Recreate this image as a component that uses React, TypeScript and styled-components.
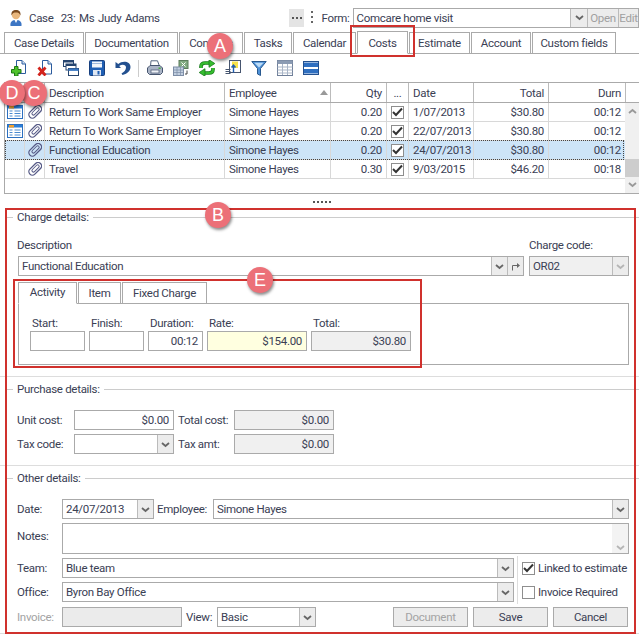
import React from 'react';
import styled, { createGlobalStyle } from 'styled-components';

const Global = createGlobalStyle`
  html, body { margin: 0; padding: 0; background: #fff; }
  body { font-family: Roboto, "Noto Sans", sans-serif; font-size: 11.5px; letter-spacing: -0.3px; color: #3a4054; }
  * { box-sizing: border-box; }
`;

const Page = styled.div`
  position: relative;
  width: 639px;
  height: 634px;
  overflow: hidden;
  background: #fff;
`;

const Text = styled.span`
  line-height: 14px;
  white-space: nowrap;
`;

const TopBar = styled.div`
  display: flex;
  align-items: center;
  height: 32px;
  padding: 3px 0 0 9px;
`;

const CaseTitle = styled(Text)`
  margin-left: 6px;
  width: 261px;
  word-spacing: 1px;
`;

const Dots = styled.div`
  width: 10px;
  height: 2px;
  background-image: linear-gradient(90deg, #555 2px, transparent 2px);
  background-size: 4px 2px;
`;

const MoreButton = styled.div`
  width: 15px;
  height: 18px;
  background: #e4e4e4;
  display: flex;
  align-items: center;
  justify-content: center;
`;

const Grip = styled.div`
  width: 2px;
  height: 14px;
  margin: 0 8px 0 7px;
  background-image: linear-gradient(#666 2px, transparent 2px);
  background-size: 2px 5px;
`;

const FormBox = styled.div`
  display: flex;
  height: 20px;
  width: 287px;
  margin-left: 3px;
  border: 1px solid #aaa;
`;

const FormValue = styled.div`
  flex: 1;
  padding-left: 3px;
  line-height: 18px;
`;

const GreyCell = styled.div<{ $w: number; $dark?: boolean }>`
  width: ${p => p.$w}px;
  flex: none;
  border-left: 1px solid #bbb;
  background: #ececec;
  color: ${p => (p.$dark ? '#666' : '#a0a0a0')};
  line-height: 18px;
  display: flex;
  align-items: center;
  justify-content: center;
  overflow: hidden;
`;

const TabRow = styled.div`
  display: flex;
  align-items: flex-end;
  height: 22px;
  padding-left: 4px;
  border-bottom: 1px solid #aaa;
`;

const Tab = styled.div<{ $w: number; $on?: boolean }>`
  width: ${p => p.$w}px;
  height: ${p => (p.$on ? 23 : 21)}px;
  margin-bottom: ${p => (p.$on ? -1 : 0)}px;
  margin-right: 1px;
  border: 1px solid #aaa;
  border-bottom: ${p => (p.$on ? '1px solid #fff' : 'none')};
  background: #fff;
  line-height: ${p => (p.$on ? 22 : 20)}px;
  text-align: center;
  white-space: nowrap;
`;

const Toolbar = styled.div`
  display: flex;
  align-items: center;
  height: 28px;
  padding-left: 11px;
`;

const Tool = styled.div`
  width: 16px;
  height: 16px;
  margin-right: 10px;
  flex: none;
  svg { display: block; }
`;

const ToolSep = styled.div`
  width: 1px;
  height: 17px;
  background: #ccc;
  margin: 0 8px 0 -3px;
`;

const Grid = styled.div`
  position: relative;
  margin-left: 4px;
  width: 635px;
  height: 112px;
  border-top: 1px solid #aaa;
  border-left: 1px solid #aaa;
  border-bottom: 1px solid #aaa;
`;

const GridRow = styled.div<{ $h: number; $sel?: boolean }>`
  display: grid;
  grid-template-columns: 20px 20px 180px 106px 56px 22px 65px 75px 77px 13px;
  height: ${p => p.$h}px;
  border-bottom: 1px solid ${p => (p.$h === 20 ? '#aaa' : '#d8d8d8')};
  background: ${p => (p.$sel ? '#cde4f7' : '#fff')};
`;

const Cell = styled.div<{ $right?: boolean; $center?: boolean; $head?: boolean; $split?: boolean }>`
  display: flex;
  align-items: center;
  justify-content: ${p => (p.$split ? 'space-between' : p.$right ? 'flex-end' : p.$center ? 'center' : 'flex-start')};
  padding: 0 4px;
  white-space: nowrap;
  overflow: hidden;
  border-right: 1px solid ${p => (p.$head ? '#bbb' : '#d8d8d8')};
`;

const IconCell = styled(Cell)`
  padding: 0;
  justify-content: center;
`;

const PlainCell = styled.div``;

const SortArrow = styled.div`
  width: 0;
  height: 0;
  margin-right: -2px;
  border-left: 4px solid transparent;
  border-right: 4px solid transparent;
  border-bottom: 5px solid #999;
`;

const Dotted = styled.div`
  position: absolute;
  left: 0;
  top: 57px;
  width: 619px;
  height: 20px;
  border: 1px dotted #444;
  pointer-events: none;
`;

const Scroll = styled.div`
  position: absolute;
  right: 0;
  top: 20px;
  bottom: 0;
  width: 14px;
  background: #f0f0f0;
  color: #999;
`;

const ScrollThumb = styled.div`
  position: absolute;
  left: 0;
  top: 56px;
  width: 14px;
  height: 18px;
  background: #cdcdcd;
`;

const ScrollArrow = styled.div<{ $top: number }>`
  position: absolute;
  left: 3px;
  top: ${p => p.$top}px;
  line-height: 0;
`;

const Splitter = styled.div`
  height: 15px;
  padding-left: 5px;
  display: flex;
  justify-content: center;
  align-items: center;
`;

const SplitDots = styled(Dots)`
  width: 18px;
`;

const Section = styled.div<{ $h: number }>`
  display: flow-root;
  height: ${p => p.$h}px;
  padding: 0 10px 0 17px;
  border-bottom: 1px solid #ddd;
  &:last-of-type { border-bottom: none; }
`;

const Legend = styled.div<{ $top?: number }>`
  display: flex;
  align-items: center;
  height: 16px;
  margin: ${p => p.$top ?? 0}px -10px 0 -10px;
  gap: 4px;
  &::before {
    content: '';
    width: 6px;
    flex: none;
    border-top: 1px solid #ccc;
  }
  &::after {
    content: '';
    flex: 1;
    border-top: 1px solid #ccc;
  }
`;

const Field = styled.div<{ $w: number; $h?: number; $bg?: string }>`
  display: flex;
  flex: none;
  width: ${p => p.$w}px;
  height: ${p => p.$h ?? 20}px;
  border: 1px solid #aaa;
  background: ${p => p.$bg ?? '#fff'};
`;

const FieldValue = styled.div<{ $right?: boolean }>`
  flex: 1;
  min-width: 0;
  padding: 0 4px 0 3px;
  line-height: 18px;
  white-space: nowrap;
  text-align: ${p => (p.$right ? 'right' : 'left')};
`;

const DropBtn = styled.div<{ $faint?: boolean }>`
  width: 16px;
  flex: none;
  background: #ececec;
  border-left: 1px solid #bbb;
  display: flex;
  align-items: center;
  justify-content: center;
  color: ${p => (p.$faint ? '#b5b5b5' : '#666')};
`;

const NotesScroll = styled(DropBtn)`
  border-left: none;
  align-items: flex-end;
  padding-bottom: 2px;
  background: #f3f3f3;
`;

const Row = styled.div<{ $top?: number; $gap?: number; $indent?: number; $start?: boolean }>`
  display: flex;
  align-items: ${p => (p.$start ? 'flex-start' : 'center')};
  margin-top: ${p => p.$top ?? 0}px;
  margin-left: ${p => p.$indent ?? 0}px;
  gap: ${p => p.$gap ?? 0}px;
`;

const Label = styled.div<{ $w?: number; $off?: boolean; $pad?: number; $top?: number }>`
  flex: none;
  width: ${p => (p.$w ? `${p.$w}px` : 'auto')};
  padding-left: ${p => p.$pad ?? 0}px;
  margin-top: ${p => p.$top ?? 0}px;
  line-height: 14px;
  white-space: nowrap;
  color: ${p => (p.$off ? '#a3a3a3' : 'inherit')};
`;

const ChargeHead = styled.div`
  display: flex;
  margin-top: 13px;
  justify-content: space-between;
  height: 18px;
`;

const InnerTabs = styled.div`
  display: flex;
  height: 22px;
  margin: 6px 0 0 1px;
`;

const InnerTab = styled.div<{ $w: number; $on?: boolean }>`
  width: ${p => p.$w}px;
  height: 22px;
  margin-right: 1px;
  border: 1px solid #aaa;
  border-bottom: ${p => (p.$on ? '1px solid #fff' : '1px solid #aaa')};
  background: #fff;
  text-align: center;
  line-height: ${p => (p.$on ? 18 : 20)}px;
  position: relative;
`;

const InnerPanel = styled.div`
  width: 611px;
  height: 62px;
  margin: -1px 0 0 1px;
  border: 1px solid #aaa;
  padding: 12px 0 0 11px;
  display: grid;
  grid-template-columns: 59px 59px 59px 104px 100px;
  grid-template-rows: 15px 20px;
`;

const InnerLabel = styled.div`
  line-height: 14px;
  padding-left: 2px;
`;

const ButtonRow = styled.div`
  display: flex;
  align-items: center;
  margin-left: 72px;
`;

const FormButton = styled.div<{ $off?: boolean }>`
  width: 75px;
  height: 20px;
  margin-left: 5px;
  border: 1px solid #aaa;
  background: #ececec;
  color: ${p => (p.$off ? '#a3a3a3' : 'inherit')};
  line-height: 18px;
  text-align: center;
`;

const CheckBox = styled.div`
  width: 13px;
  height: 13px;
  flex: none;
  border: 1px solid #8e8e8e;
  background: #fff;
  display: flex;
  align-items: center;
  justify-content: center;
`;

const CheckRow = styled.div`
  display: flex;
  align-items: center;
  gap: 3px;
  height: 20px;
  white-space: nowrap;
`;

const SideChecks = styled.div`
  display: flex;
  flex-direction: column;
  gap: 4px;
  margin: -2px 0 -2px 3px;
  padding-left: 4px;
  border-left: 1px solid #ddd;
  height: 48px;
  justify-content: center;
`;

const Marker = styled.div<{ $l: number; $t: number; $w: number; $h: number }>`
  position: absolute;
  left: ${p => p.$l}px;
  top: ${p => p.$t}px;
  width: ${p => p.$w}px;
  height: ${p => p.$h}px;
  border: 2px solid #d0312d;
  pointer-events: none;
`;

const Badge = styled.div<{ $l: number; $t: number }>`
  position: absolute;
  left: ${p => p.$l}px;
  top: ${p => p.$t}px;
  width: 26px;
  height: 26px;
  border-radius: 50%;
  background: #ec7078;
  color: #fff;
  font-family: "Liberation Sans", sans-serif;
  font-size: 18px;
  letter-spacing: 0;
  line-height: 26px;
  text-align: center;
  box-shadow: 1px 2px 3px rgba(0, 0, 0, 0.45);
`;

const Chevron = ({ up }: { up?: boolean }) => (
  <svg width="9" height="7" viewBox="0 0 9 7">
    <path d={up ? 'M1 5L4.5 2L8 5' : 'M1 2L4.5 5L8 2'} fill="none" stroke="currentColor" strokeWidth="1.8" />
  </svg>
);

const Tick = () => (
  <svg width="11" height="10" viewBox="0 0 11 10">
    <path d="M1 5L4 8L10 1.5" fill="none" stroke="#333" strokeWidth="2" />
  </svg>
);

const JumpArrow = () => (
  <svg width="10" height="9" viewBox="0 0 10 9">
    <path d="M1.500 8.500V3.500H6" fill="none" stroke="#666" />
    <path d="M6 1l3 2.500L6 6z" fill="#666" />
  </svg>
);

const PersonIcon = () => (
  <svg width="14" height="18" viewBox="0 0 14 18">
    <path d="M1.500 17c-.6-4 1.600-6 5.500-6s6.100 2 5.500 6z" fill="#3d76c4" />
    <circle cx="7" cy="6" r="4.200" fill="#e9b77d" />
    <path d="M2.500 6.500C2 2.500 4 1 7 1s5 1.500 4.500 5.500C10.500 4 9 3.500 7 3.500S3.500 4 2.500 6.500z" fill="#7a4a1e" />
    <path d="M5.500 11h3L7 14z" fill="#fff" />
  </svg>
);

const AddDocIcon = () => (
  <svg width="16" height="16" viewBox="0 0 16 16">
    <path d="M5.500 .5h5.500l3.500 3.500v9.500h-9z" fill="#fff" stroke="#2c5c9e" />
    <path d="M11 .5v3.500h3.500" fill="#cfe0f3" stroke="#2c5c9e" />
    <path d="M3.500 6.500h3.500v3h3v3.500H7v3H3.500v-3H.5V9.500h3z" fill="#4fc22c" stroke="#1f7a14" />
  </svg>
);

const DelDocIcon = () => (
  <svg width="16" height="16" viewBox="0 0 16 16">
    <path d="M5.500 .5h5.500l3.500 3.500v10h-9z" fill="#fff" stroke="#2c5c9e" />
    <path d="M11 .5v3.500h3.500" fill="#cfe0f3" stroke="#2c5c9e" />
    <path d="M1.500 7.500l7 8M8.500 7.500l-7 8" stroke="#d3231c" strokeWidth="2.800" />
  </svg>
);

const WindowsIcon = () => (
  <svg width="16" height="16" viewBox="0 0 16 16">
    <rect x=".5" y=".5" width="10" height="6" fill="#fff" stroke="#26456f" />
    <rect x=".5" y=".5" width="10" height="2" fill="#26456f" />
    <rect x="3" y="4" width="10" height="6" fill="#fff" stroke="#26456f" />
    <rect x="3" y="4" width="10" height="2" fill="#26456f" />
    <rect x="5.500" y="8.500" width="10" height="7" fill="#fff" stroke="#26456f" />
    <rect x="5.500" y="8.500" width="10" height="2.400" fill="#3a78c2" />
  </svg>
);

const SaveIcon = () => (
  <svg width="16" height="16" viewBox="0 0 16 16">
    <rect x=".5" y=".5" width="15" height="15" rx="1" fill="#1f5fb4" stroke="#173f7e" />
    <rect x="3" y="1.500" width="10" height="6" fill="#f2f6fb" />
    <path d="M3 3.500h10" stroke="#9fb9dc" />
    <rect x="4" y="10" width="8" height="5.500" fill="#dfe7f2" />
    <rect x="8.500" y="11" width="2" height="3.500" fill="#1f5fb4" />
  </svg>
);

const UndoIcon = () => (
  <svg width="16" height="16" viewBox="0 0 16 16">
    <path d="M.5 2v6h5.500L4.200 6C7 4 11 4.500 11 7.500c0 2.500-2 4.500-4.500 6l1 1.500c4-1 8-3.500 8-8C15.500 1.500 8 0 3.300 3.900z" fill="#23508f" />
  </svg>
);

const PrintIcon = () => (
  <svg width="16" height="16" viewBox="0 0 16 16">
    <path d="M4 .8h6.500l2 5.500h-9z" fill="#fff" stroke="#55657f" />
    <path d="M.5 8l2.500-2.500h10L15.500 8v4.500l-2 2h-11l-2-2z" fill="#aab4c6" stroke="#46556f" />
    <rect x="4" y="10" width="8" height="3" fill="#eef1f6" stroke="#46556f" strokeWidth=".7" />
    <rect x="11.500" y="7.500" width="2.200" height="1.400" fill="#46a83a" />
  </svg>
);

const ExportIcon = () => (
  <svg width="16" height="16" viewBox="0 0 16 16">
    <rect x="6" y=".5" width="9" height="8" fill="#7fa97f" stroke="#5c7c5c" />
    <path d="M8.500 2.500l4 4M12.500 2.500l-4 4" stroke="#fff" />
    <rect x=".5" y="7" width="10" height="8.500" fill="#c2cfe0" stroke="#7d8da6" />
    <path d="M.5 10h10M.5 12.500h10M4 7v8.500M7.500 7v8.500" stroke="#7d8da6" strokeWidth=".7" />
    <path d="M14 10.500v3.500h-2" fill="none" stroke="#444" />
  </svg>
);

const RefreshIcon = () => (
  <svg width="16" height="16" viewBox="0 0 16 16">
    <path d="M2 8V6.500C2 4 3.500 3 6 3h5" fill="none" stroke="#17791a" strokeWidth="3.600" />
    <path d="M2 8V6.500C2 4 3.500 3 6 3h5" fill="none" stroke="#36bd2f" strokeWidth="2.200" />
    <path d="M10 -.3L15.800 3.500L10 7.300z" fill="#36bd2f" stroke="#17791a" strokeWidth=".8" />
    <path d="M14 8v1.500C14 12 12.500 13 10 13H5" fill="none" stroke="#17791a" strokeWidth="3.600" />
    <path d="M14 8v1.500C14 12 12.500 13 10 13H5" fill="none" stroke="#36bd2f" strokeWidth="2.200" />
    <path d="M6 8.700L.2 12.500L6 16.300z" fill="#36bd2f" stroke="#17791a" strokeWidth=".8" />
  </svg>
);

const MoveDocIcon = () => (
  <svg width="16" height="16" viewBox="0 0 16 16">
    <rect x="4.500" y=".5" width="11" height="12" fill="#fff" stroke="#46556f" />
    <rect x="7" y="1.500" width="6" height="6.500" fill="#f6e24b" />
    <path d="M.5 9.500h5M.5 11.500h5M.5 13.500h5" stroke="#46556f" />
    <path d="M8.500 12.500V5M6.500 7.500l2-2.500 2 2.500" fill="none" stroke="#1f5fb4" strokeWidth="1.400" />
  </svg>
);

const FilterIcon = () => (
  <svg width="16" height="16" viewBox="0 0 16 16">
    <path d="M.8 1.500h14.400L9.500 8.500v7l-3-1.500V8.500z" fill="#4f92d8" stroke="#28598f" />
    <path d="M3.500 2.800h9L8 7.500z" fill="#bcdcf7" />
  </svg>
);

const TableIcon = () => (
  <svg width="16" height="16" viewBox="0 0 16 16">
    <rect x=".5" y=".5" width="15" height="15" fill="#fff" stroke="#6f7f99" />
    <rect x=".5" y=".5" width="15" height="3.500" fill="#8b9bb3" />
    <path d="M.5 7h15M.5 10h15M.5 13h15M5.500 4v11M10.500 4v11" stroke="#a9b5c7" />
  </svg>
);

const PanelsIcon = () => (
  <svg width="16" height="16" viewBox="0 0 16 16">
    <rect x=".5" y="1.500" width="15" height="13" fill="#fff" stroke="#23508f" />
    <rect x="1" y="2.500" width="14" height="4.500" fill="#2f6fc0" />
    <rect x="1" y="9" width="14" height="4.500" fill="#2f6fc0" />
  </svg>
);

const FormIcon = () => (
  <svg width="16" height="14" viewBox="0 0 16 14">
    <rect x=".5" y=".5" width="15" height="13" fill="#fff" stroke="#2b6fc0" />
    <rect x="1" y="1" width="14" height="2.500" fill="#2b7fd8" />
    <rect x="2" y="1" width="5" height="2.500" fill="#f0a030" />
    <path d="M2.500 6h3M2.500 8.500h3M2.500 11h3M7.500 6h6M7.500 8.500h6M7.500 11h6" stroke="#4a8ad0" />
  </svg>
);

const ClipIcon = () => (
  <svg width="15" height="15" viewBox="0 0 15 15">
    <g transform="rotate(45 7.500 7.500)" fill="none" stroke="#565a86">
      <rect x="4" y="-1" width="7" height="15" rx="3.500" strokeWidth="1.300" />
      <rect x="6" y="1.500" width="3" height="9" rx="1.500" strokeWidth="1" />
    </g>
  </svg>
);

type CostRow = { form: boolean; desc: string; qty: string; date: string; total: string; durn: string; sel?: boolean };

const rows: CostRow[] = [
  { form: true, desc: 'Return To Work Same Employer', qty: '0.20', date: '1/07/2013', total: '$30.80', durn: '00:12' },
  { form: true, desc: 'Return To Work Same Employer', qty: '0.20', date: '22/07/2013', total: '$30.80', durn: '00:12' },
  { form: false, desc: 'Functional Education', qty: '0.20', date: '24/07/2013', total: '$30.80', durn: '00:12', sel: true },
  { form: false, desc: 'Travel', qty: '0.30', date: '9/03/2015', total: '$46.20', durn: '00:18' },
];

const tabs: [string, number, boolean?][] = [
  ['Case Details', 80],
  ['Documentation', 93],
  ['Contacts', 64],
  ['Tasks', 48],
  ['Calendar', 63],
  ['Costs', 51, true],
  ['Estimate', 61],
  ['Account', 60],
  ['Custom fields', 84],
];

export default function App() {
  return (
    <Page>
      <Global />
      <TopBar>
        <PersonIcon />
        <CaseTitle>Case&nbsp; 23: Ms Judy Adams</CaseTitle>
        <MoreButton><Dots /></MoreButton>
        <Grip />
        <Text>Form:</Text>
        <FormBox>
          <FormValue>Comcare home visit</FormValue>
          <GreyCell $w={17} $dark><Chevron /></GreyCell>
          <GreyCell $w={31}>Open</GreyCell>
          <GreyCell $w={20}>Edit</GreyCell>
        </FormBox>
      </TopBar>
      <TabRow>
        {tabs.map(([name, w, on]) => (
          <Tab key={name} $w={w} $on={on}>{name}</Tab>
        ))}
      </TabRow>
      <Toolbar>
        <Tool><AddDocIcon /></Tool>
        <Tool><DelDocIcon /></Tool>
        <Tool><WindowsIcon /></Tool>
        <Tool><SaveIcon /></Tool>
        <Tool><UndoIcon /></Tool>
        <ToolSep />
        <Tool><PrintIcon /></Tool>
        <Tool><ExportIcon /></Tool>
        <Tool><RefreshIcon /></Tool>
        <Tool><MoveDocIcon /></Tool>
        <Tool><FilterIcon /></Tool>
        <Tool><TableIcon /></Tool>
        <Tool><PanelsIcon /></Tool>
      </Toolbar>
      <Grid>
        <GridRow $h={20}>
          <Cell $head /><Cell $head />
          <Cell $head>Description</Cell>
          <Cell $head $split>Employee<SortArrow /></Cell>
          <Cell $head $right>Qty</Cell>
          <Cell $head $center>...</Cell>
          <Cell $head>Date</Cell>
          <Cell $head $right>Total</Cell>
          <Cell $head $right>Durn</Cell>
          <PlainCell />
        </GridRow>
        {rows.map(r => (
          <GridRow key={r.date} $h={19} $sel={r.sel}>
            <IconCell>{r.form && <FormIcon />}</IconCell>
            <IconCell><ClipIcon /></IconCell>
            <Cell>{r.desc}</Cell>
            <Cell>Simone Hayes</Cell>
            <Cell $right>{r.qty}</Cell>
            <IconCell><CheckBox><Tick /></CheckBox></IconCell>
            <Cell>{r.date}</Cell>
            <Cell $right>{r.total}</Cell>
            <Cell $right>{r.durn}</Cell>
            <PlainCell />
          </GridRow>
        ))}
        <Dotted />
        <Scroll>
          <ScrollArrow $top={5}><Chevron up /></ScrollArrow>
          <ScrollThumb />
          <ScrollArrow $top={78}><Chevron /></ScrollArrow>
        </Scroll>
      </Grid>
      <Splitter><SplitDots /></Splitter>

      <Section $h={168}>
        <Legend>Charge details:</Legend>
        <ChargeHead>
          <Label>Description</Label>
          <Label $w={100}>Charge code:</Label>
        </ChargeHead>
        <Row $gap={5} $indent={1}>
          <Field $w={506}>
            <FieldValue>Functional Education</FieldValue>
            <DropBtn><Chevron /></DropBtn>
            <DropBtn><JumpArrow /></DropBtn>
          </Field>
          <Field $w={100} $bg="#f0f0f0">
            <FieldValue>OR02</FieldValue>
            <DropBtn $faint><Chevron /></DropBtn>
          </Field>
        </Row>
        <InnerTabs>
          <InnerTab $w={59} $on>Activity</InnerTab>
          <InnerTab $w={43}>Item</InnerTab>
          <InnerTab $w={85}>Fixed Charge</InnerTab>
        </InnerTabs>
        <InnerPanel>
          <InnerLabel>Start:</InnerLabel>
          <InnerLabel>Finish:</InnerLabel>
          <InnerLabel>Duration:</InnerLabel>
          <InnerLabel>Rate:</InnerLabel>
          <InnerLabel>Total:</InnerLabel>
          <Field $w={55} />
          <Field $w={55} />
          <Field $w={55}><FieldValue $right>00:12</FieldValue></Field>
          <Field $w={100} $bg="#ffffe0"><FieldValue $right>$154.00</FieldValue></Field>
          <Field $w={100} $bg="#f0f0f0"><FieldValue $right>$30.80</FieldValue></Field>
        </InnerPanel>
      </Section>

      <Section $h={89}>
        <Legend $top={4}>Purchase details:</Legend>
        <Row $top={13}>
          <Label $w={57}>Unit cost:</Label>
          <Field $w={100}><FieldValue $right>$0.00</FieldValue></Field>
          <Label $w={60} $pad={4}>Total cost:</Label>
          <Field $w={100} $bg="#f0f0f0"><FieldValue $right>$0.00</FieldValue></Field>
        </Row>
        <Row $top={4}>
          <Label $w={57}>Tax code:</Label>
          <Field $w={100}><FieldValue /><DropBtn><Chevron /></DropBtn></Field>
          <Label $w={60} $pad={4}>Tax amt:</Label>
          <Field $w={100} $bg="#f0f0f0"><FieldValue $right>$0.00</FieldValue></Field>
        </Row>
      </Section>

      <Section $h={168}>
        <Legend $top={4}>Other details:</Legend>
        <Row $top={13}>
          <Label $w={45}>Date:</Label>
          <Field $w={92}><FieldValue>24/07/2013</FieldValue><DropBtn><Chevron /></DropBtn></Field>
          <Label $w={59} $pad={3}>Employee:</Label>
          <Field $w={416}><FieldValue>Simone Hayes</FieldValue><DropBtn><Chevron /></DropBtn></Field>
        </Row>
        <Row $top={4} $start>
          <Label $w={45} $top={6}>Notes:</Label>
          <Field $w={567} $h={31}>
            <FieldValue />
            <NotesScroll $faint><Chevron /></NotesScroll>
          </Field>
        </Row>
        <Row $top={4} $start>
          <div>
            <Row>
              <Label $w={45}>Team:</Label>
              <Field $w={452}><FieldValue>Blue team</FieldValue><DropBtn><Chevron /></DropBtn></Field>
            </Row>
            <Row $top={4}>
              <Label $w={45}>Office:</Label>
              <Field $w={452}><FieldValue>Byron Bay Office</FieldValue><DropBtn><Chevron /></DropBtn></Field>
            </Row>
          </div>
          <SideChecks>
            <CheckRow><CheckBox><Tick /></CheckBox>Linked to estimate</CheckRow>
            <CheckRow><CheckBox />Invoice Required</CheckRow>
          </SideChecks>
        </Row>
        <Row $top={5}>
          <Label $w={45} $off>Invoice:</Label>
          <Field $w={120} $bg="#ebebeb" />
          <Label $w={35} $pad={4}>View:</Label>
          <Field $w={99}><FieldValue>Basic</FieldValue><DropBtn><Chevron /></DropBtn></Field>
          <ButtonRow>
            <FormButton $off>Document</FormButton>
            <FormButton>Save</FormButton>
            <FormButton>Cancel</FormButton>
          </ButtonRow>
        </Row>
      </Section>

      <Marker $l={350} $t={25} $w={65} $h={32} />
      <Marker $l={5} $t={208} $w={631} $h={426} />
      <Marker $l={13} $t={279} $w={409} $h={89} />
      <Badge $l={207} $t={33}>A</Badge>
      <Badge $l={205} $t={202}>B</Badge>
      <Badge $l={21} $t={80}>C</Badge>
      <Badge $l={-1} $t={80}>D</Badge>
      <Badge $l={247} $t={267}>E</Badge>
    </Page>
  );
}
